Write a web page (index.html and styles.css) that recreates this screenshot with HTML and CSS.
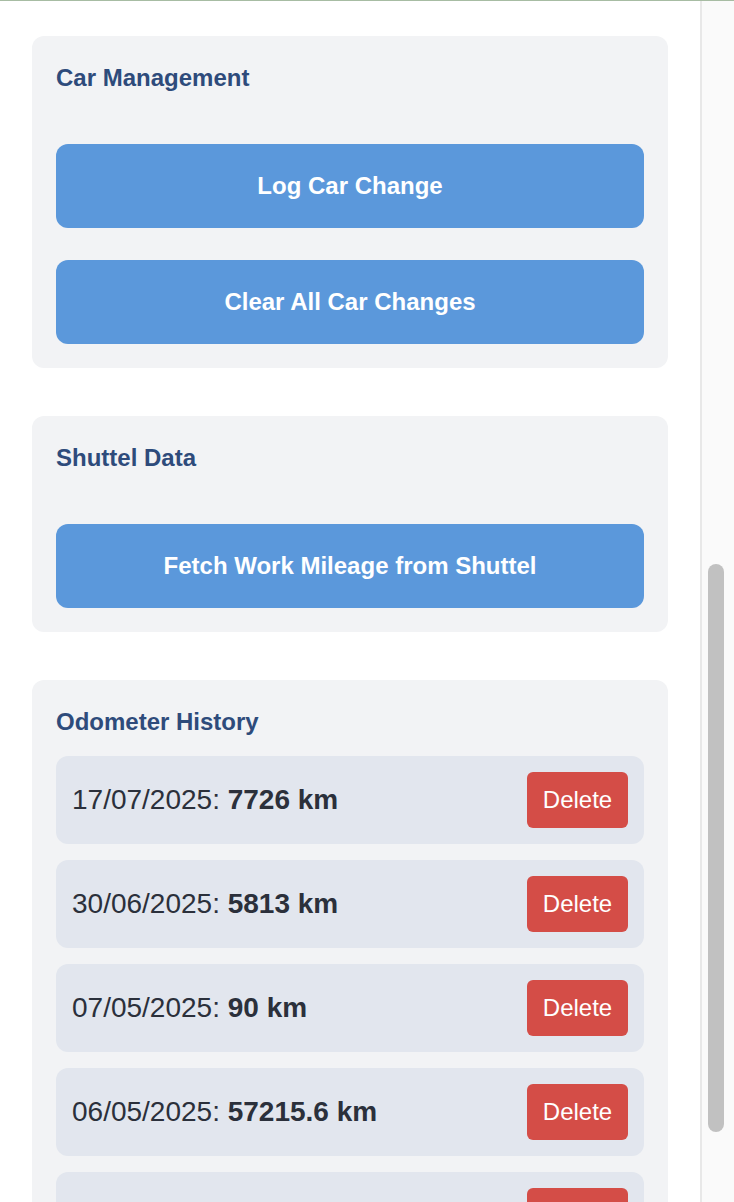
FILE: index.html
```html
<!DOCTYPE html>
<html lang="en">
<head>
<meta charset="utf-8">
<title>Car Management</title>
<link rel="stylesheet" href="styles.css">
</head>
<body>
<div class="frame">
  <main class="page">
    <section class="card">
      <h3 class="card-title">Car Management</h3>
      <div class="actions">
        <button class="btn">Log Car Change</button>
        <button class="btn">Clear All Car Changes</button>
      </div>
    </section>
    <section class="card">
      <h3 class="card-title">Shuttel Data</h3>
      <div class="actions">
        <button class="btn">Fetch Work Mileage from Shuttel</button>
      </div>
    </section>
    <section class="card">
      <h3 class="card-title">Odometer History</h3>
      <ul class="history">
        <li class="row"><span>17/07/2025: <b>7726 km</b></span><button class="del">Delete</button></li>
        <li class="row"><span>30/06/2025: <b>5813 km</b></span><button class="del">Delete</button></li>
        <li class="row"><span>07/05/2025: <b>90 km</b></span><button class="del">Delete</button></li>
        <li class="row"><span>06/05/2025: <b>57215.6 km</b></span><button class="del">Delete</button></li>
        <li class="row"><span>01/05/2025: <b>57100 km</b></span><button class="del">Delete</button></li>
      </ul>
    </section>
  </main>
  <div class="scrollbar"><div class="thumb"></div></div>
  <div class="outside"></div>
</div>
</body>
</html>
```
FILE: styles.css
```css
html, body {
  margin: 0;
  padding: 0;
  height: 1202px;
  overflow: hidden;
  background: #ffffff;
  font-family: "Liberation Sans", Arial, sans-serif;
}
.frame {
  display: flex;
  height: 1202px;
  border-top: 1px solid #a7bca3;
  box-sizing: border-box;
}
.page {
  width: 700px;
  flex: none;
  box-sizing: border-box;
  padding: 35px 32px 0;
  display: flex;
  flex-direction: column;
  gap: 48px;
}
.card {
  background: #f2f3f5;
  border-radius: 12px;
  padding: 24px;
}
.card-title {
  margin: 0 0 16px;
  font-size: 24px;
  line-height: 36px;
  font-weight: 700;
  color: #2e4b7b;
}
.actions {
  padding-top: 32px;
  display: flex;
  flex-direction: column;
  gap: 32px;
}
.btn {
  height: 84px;
  border: none;
  border-radius: 12px;
  background: #5b98db;
  color: #ffffff;
  font-family: inherit;
  font-size: 24px;
  font-weight: 700;
  padding: 0;
}
.history {
  list-style: none;
  margin: 0;
  padding: 0;
  display: flex;
  flex-direction: column;
  gap: 16px;
}
.row {
  display: flex;
  align-items: center;
  justify-content: space-between;
  background: #e2e6ee;
  border-radius: 12px;
  padding: 16px;
  font-size: 28px;
  color: #2b303b;
}
.row b { font-weight: 700; }
.del {
  width: 101px;
  height: 56px;
  border: none;
  border-radius: 6px;
  background: #d44d47;
  color: #ffffff;
  font-family: inherit;
  font-size: 24px;
  padding: 0;
}
.scrollbar {
  width: 27px;
  flex: none;
  background: #fafafa;
  border-left: 2px solid #e8e8e8;
  border-right: 1px solid #3c3c3c;
  padding-top: 563px;
  padding-left: 6px;
  box-sizing: content-box;
}
.thumb {
  width: 16px;
  height: 568px;
  border-radius: 8px;
  background: #c1c1c1;
}
.outside {
  flex: 1;
  background: linear-gradient(#c2d5be 0, #c2d5be 79px, #888 79px, #888 80px, #1f1f1f 80px);
}
```
